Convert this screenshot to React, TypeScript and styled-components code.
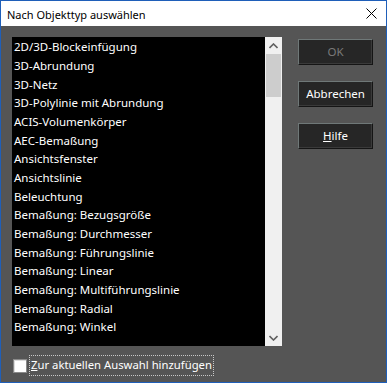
import React from "react";
import styled, { createGlobalStyle } from "styled-components";

const Global = createGlobalStyle`
  html, body { margin: 0; padding: 0; background: #ffffff; }
  body { font-family: "Noto Sans", "Segoe UI", sans-serif; }
  * { box-sizing: border-box; }
`;

const Window = styled.div`
  width: 387px;
  height: 383px;
  border: 1px solid #1f5fb9;
  display: flex;
  flex-direction: column;
  background: #555555;
  font-family: "Noto Sans", sans-serif;
  font-size: 12px;
`;

const TitleBar = styled.div`
  height: 25px;
  background: #ffffff;
  display: flex;
  align-items: center;
  justify-content: space-between;
  padding: 0 9px 0 6px;
  flex-shrink: 0;
`;

const Title = styled.span`
  color: #000000;
  font-size: 11px;
  line-height: 1;
  margin-top: 1px;
`;

const Body = styled.div`
  flex: 1;
  display: flex;
  flex-direction: column;
  padding: 11px 12px 0 11px;
`;

const Main = styled.div`
  display: flex;
  gap: 16px;
`;

const ListBox = styled.div`
  width: 270px;
  height: 309px;
  display: flex;
  background: #000000;
`;

const Items = styled.div`
  flex: 1;
  overflow: hidden;
  display: flex;
  flex-direction: column;
`;

const Item = styled.div`
  height: 18.667px;
  flex-shrink: 0;
  display: flex;
  align-items: center;
  padding-left: 2px;
  padding-top: 1px;
  color: #ffffff;
  font-size: 11.5px;
  white-space: nowrap;
`;

const ScrollBar = styled.div`
  width: 17px;
  background: #f0f0f0;
  display: flex;
  flex-direction: column;
`;

const Arrow = styled.div`
  height: 17px;
  display: flex;
  align-items: center;
  justify-content: center;
  flex-shrink: 0;
`;

const Track = styled.div`
  flex: 1;
  display: flex;
  flex-direction: column;
`;

const Thumb = styled.div`
  height: 43px;
  margin: 0 1px;
  background: #cdcdcd;
`;

const Buttons = styled.div`
  display: flex;
  flex-direction: column;
  gap: 16px;
  padding-top: 2px;
`;

const Button = styled.div<{ $disabled?: boolean }>`
  width: 75px;
  height: 26px;
  display: flex;
  align-items: center;
  justify-content: center;
  background: #262626;
  border: 1px solid;
  border-color: #6f7878 #151515 #151515 #6f7878;
  box-shadow: inset -1px -1px 0 #3a3a3a;
  color: ${(p) => (p.$disabled ? "#7a7a7a" : "#ffffff")};
  font-size: 11.5px;
  padding-bottom: 1px;
`;

const CheckRow = styled.div`
  display: flex;
  align-items: center;
  gap: 2px;
  margin-top: 9px;
  margin-left: 1px;
`;

const Box = styled.div`
  width: 14px;
  height: 14px;
  background: #ffffff;
  border: 1px solid #8a8a8a;
  box-shadow: inset 1px 1px 0 #dcdcdc;
`;

const Label = styled.span`
  color: #ffffff;
  font-size: 11.3px;
  border: 1px dotted #c8c8c8;
  padding: 1px 1px 2px 1px;
  line-height: 16px;
`;

const U = styled.span`
  text-decoration: underline;
`;

const items = [
  "2D/3D-Blockeinfügung",
  "3D-Abrundung",
  "3D-Netz",
  "3D-Polylinie mit Abrundung",
  "ACIS-Volumenkörper",
  "AEC-Bemaßung",
  "Ansichtsfenster",
  "Ansichtslinie",
  "Beleuchtung",
  "Bemaßung: Bezugsgröße",
  "Bemaßung: Durchmesser",
  "Bemaßung: Führungslinie",
  "Bemaßung: Linear",
  "Bemaßung: Multiführungslinie",
  "Bemaßung: Radial",
  "Bemaßung: Winkel",
];

export default function App() {
  return (
    <>
      <Global />
      <Window>
        <TitleBar>
          <Title>Nach Objekttyp auswählen</Title>
          <svg width="11" height="11" viewBox="0 0 11 11">
            <path d="M0.5 0.5 L10.5 10.5 M10.5 0.5 L0.5 10.5" stroke="#000" strokeWidth="1" />
          </svg>
        </TitleBar>
        <Body>
          <Main>
            <ListBox>
              <Items>
                {items.map((t) => (
                  <Item key={t}>{t}</Item>
                ))}
              </Items>
              <ScrollBar>
                <Arrow>
                  <svg width="9" height="6" viewBox="0 0 9 6">
                    <path d="M0.5 5 L4.5 1 L8.5 5" stroke="#606060" strokeWidth="1.6" fill="none" />
                  </svg>
                </Arrow>
                <Track>
                  <Thumb />
                </Track>
                <Arrow>
                  <svg width="9" height="6" viewBox="0 0 9 6">
                    <path d="M0.5 1 L4.5 5 L8.5 1" stroke="#606060" strokeWidth="1.6" fill="none" />
                  </svg>
                </Arrow>
              </ScrollBar>
            </ListBox>
            <Buttons>
              <Button $disabled>OK</Button>
              <Button>Abbrechen</Button>
              <Button>
                <span>
                  <U>H</U>ilfe
                </span>
              </Button>
            </Buttons>
          </Main>
          <CheckRow>
            <Box />
            <Label>
              <U>Z</U>ur aktuellen Auswahl hinzufügen
            </Label>
          </CheckRow>
        </Body>
      </Window>
    </>
  );
}
